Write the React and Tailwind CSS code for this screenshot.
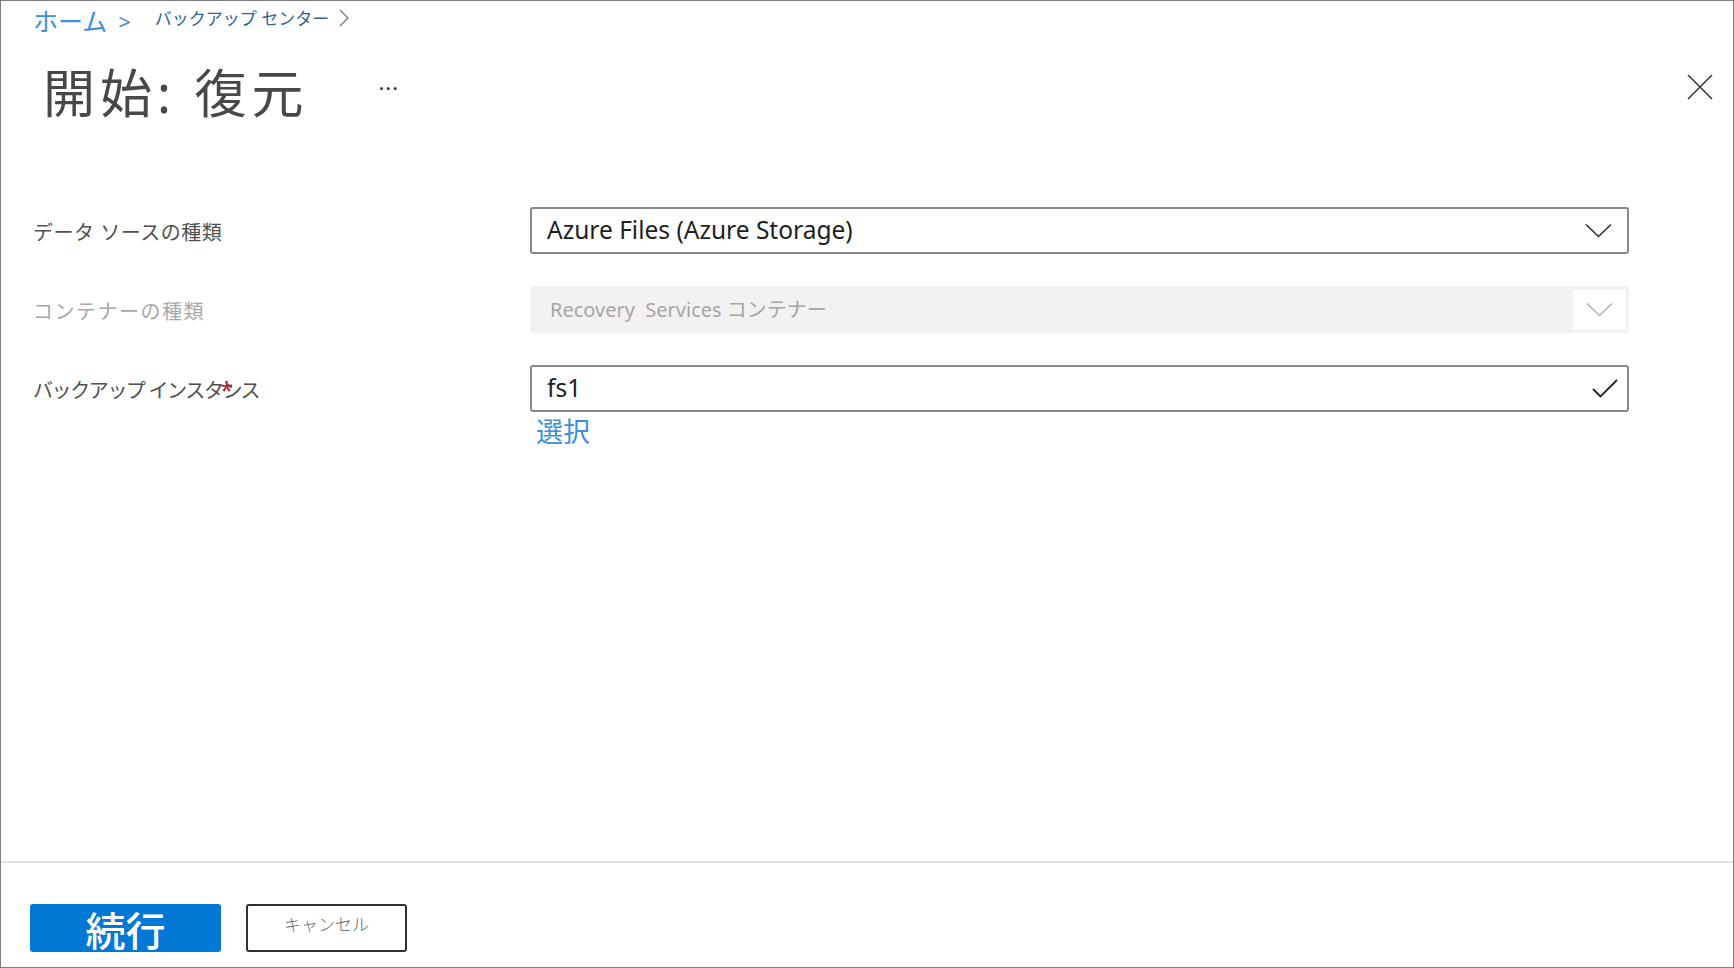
const font = "font-['Segoe_UI','Noto_Sans','Noto_Sans_CJK_JP',sans-serif]";

const Chevron = ({ color = '#323130' }) => (
  <svg width="27" height="15" viewBox="0 0 27 15" fill="none">
    <path d="M1 1.5 L13.5 13.5 L26 1.5" stroke={color} strokeWidth="1.6" />
  </svg>
);

const Row = ({ label, muted, children, required, tracking = '' }) => (
  <div className="flex items-start">
    <div className="w-[497px] h-[47px] flex items-center pt-[4px]">
      <span className={`relative text-[20px] ${tracking} ${muted ? 'text-[#a8a8a8]' : 'text-[#505050]'}`}>
        {label}
        {required && (
          <span className="absolute left-[187px] top-[-1px] text-[24px] leading-[30px] tracking-normal text-[#a4262c]">*</span>
        )}
      </span>
    </div>
    <div className="w-[1099px]">{children}</div>
  </div>
);

export default function App() {
  return (
    <div className={`w-[1734px] h-[968px] bg-white border border-[#7f7f7f] flex flex-col ${font}`}>
      {/* breadcrumb */}
      <div className="h-[40px] flex items-center pl-[32px]">
        <span className="text-[25px] leading-none text-[#3c8ede]">ホーム</span>
        <span className="ml-[11px] text-[22px] leading-none text-[#3c8ede]">&gt;</span>
        <span className="ml-[24px] text-[17px] leading-none text-[#2f6597] -mt-[6px]">バックアップ センター</span>
        <svg className="ml-[10px] -mt-[6px]" width="10" height="18" viewBox="0 0 10 18" fill="none">
          <path d="M1 1 L9 9 L1 17" stroke="#7a7a7a" strokeWidth="1.3" />
        </svg>
      </div>

      {/* title */}
      <div className="h-[110px] flex items-center pl-[42px] pr-[20px]">
        <h1 className="text-[52px] leading-none tracking-[5px] text-[#484848] -mt-[6px]">開始: 復元</h1>
        <span className="ml-[70px] -mt-[18px] text-[22px] leading-none tracking-[1px] text-[#333]">···</span>
        <div className="flex-1" />
        <svg width="26" height="26" viewBox="0 0 26 26" fill="none" className="-mt-[18px]">
          <path d="M1 1 L25 25 M25 1 L1 25" stroke="#3a3a3a" strokeWidth="1.6" />
        </svg>
      </div>

      {/* form */}
      <div className="mt-[56px] pl-[32px] flex flex-col gap-[32px]">
        <Row label="データ ソースの種類" tracking="tracking-[0.5px]">
          <div className="h-[47px] border-2 border-[#8a8886] rounded-[3px] flex items-center pl-[15px] pr-[15px]">
            <span className="flex-1 text-[24.5px] text-[#201f1e]">Azure Files (Azure Storage)</span>
            <Chevron />
          </div>
        </Row>
        <Row label="コンテナーの種類" muted tracking="tracking-[1.5px]">
          <div className="h-[47px] bg-[#f3f2f1] rounded-[3px] flex items-center pl-[20px] pr-[3px]">
            <span className="flex-1 text-[20px] text-[#a6a6a6]">Recovery&nbsp; Services コンテナー</span>
            <div className="w-[53px] h-[40px] bg-white flex items-center justify-center">
              <Chevron color="#b3b3b3" />
            </div>
          </div>
        </Row>
        <Row label="バックアップ インスタンス" required tracking="tracking-[-1.4px]">
          <div className="h-[47px] border-2 border-[#8a8886] rounded-[3px] flex items-center pl-[15px] pr-[9px]">
            <span className="flex-1 text-[24.5px] text-[#201f1e]">fs1</span>
            <svg width="26" height="19" viewBox="0 0 26 19" fill="none">
              <path d="M1 10 L8.5 17.5 L25 1" stroke="#252525" strokeWidth="1.8" />
            </svg>
          </div>
          <div className="pl-[6px] pt-[3px] text-[27px] leading-[34px] text-[#3c8ede]">選択</div>
        </Row>
      </div>

      <div className="flex-1" />

      {/* footer */}
      <div className="border-t-2 border-[#e1e1e1] pt-[41px] pb-[15px] pl-[29px] flex gap-[25px]">
        <button className="w-[191px] h-[48px] bg-[#0078d4] rounded-[3px] text-white text-[40px] leading-none font-medium flex items-end justify-center pb-[1px]">
          続行
        </button>
        <button className="w-[161px] h-[48px] border-2 border-[#323130] rounded-[3px] text-[#666] text-[17px] font-light flex items-center justify-center">
          <span className="-mt-[6px]">キャンセル</span>
        </button>
      </div>
    </div>
  );
}
